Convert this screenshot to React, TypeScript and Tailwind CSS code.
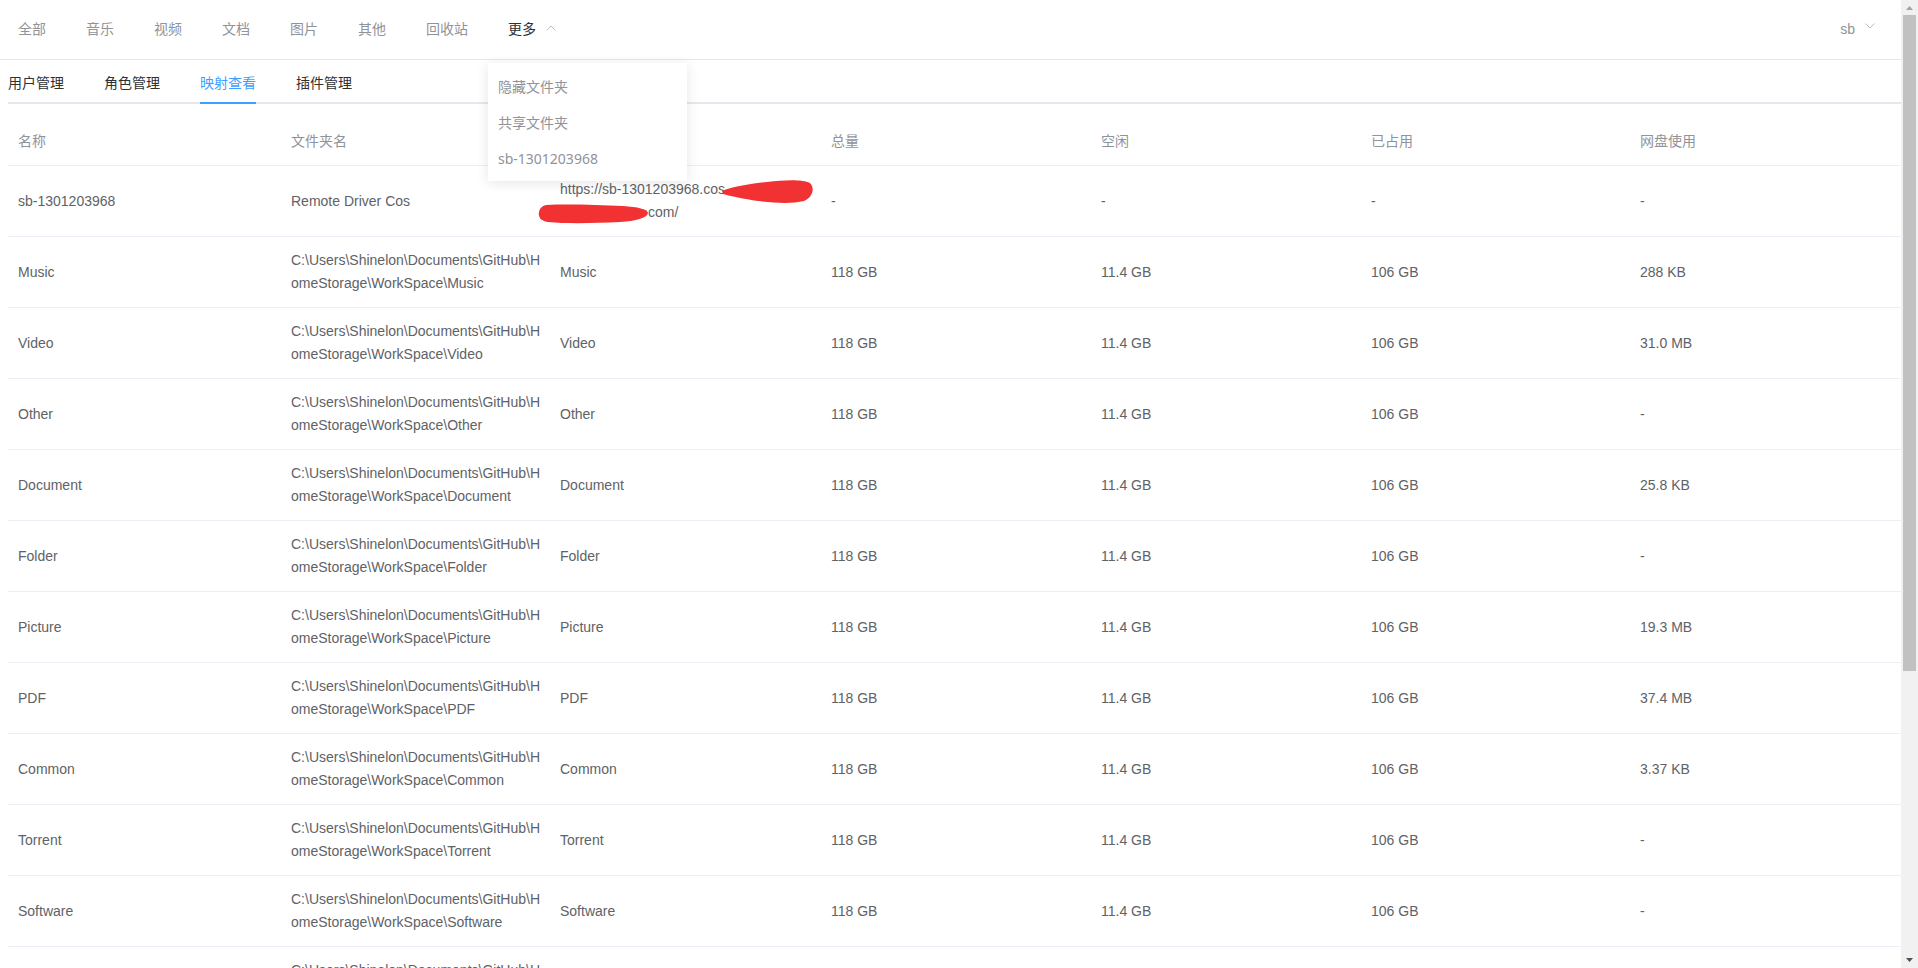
import React from 'react';

interface Mapping {
  name: string;
  folder: string[];
  target: string;
  total: string;
  free: string;
  used: string;
  disk: string;
}

const base = 'C:\\Users\\Shinelon\\Documents\\GitHub\\H';

const folderRow = (name: string, disk: string): Mapping => ({
  name,
  folder: [base, `omeStorage\\WorkSpace\\${name}`],
  target: name,
  total: '118 GB',
  free: '11.4 GB',
  used: '106 GB',
  disk,
});

const rows: Mapping[] = [
  folderRow('Music', '288 KB'),
  folderRow('Video', '31.0 MB'),
  folderRow('Other', '-'),
  folderRow('Document', '25.8 KB'),
  folderRow('Folder', '-'),
  folderRow('Picture', '19.3 MB'),
  folderRow('PDF', '37.4 MB'),
  folderRow('Common', '3.37 KB'),
  folderRow('Torrent', '-'),
  folderRow('Software', '-'),
  folderRow('Share', '-'),
];

const navItems = ['全部', '音乐', '视频', '文档', '图片', '其他', '回收站'];
const tabs = ['用户管理', '角色管理', '映射查看', '插件管理'];
// third header sits under the open dropdown
const headers = ['名称', '文件夹名', '', '总量', '空闲', '已占用', '网盘使用'];

const font = { fontFamily: '"Liberation Sans", "Noto Sans CJK SC", sans-serif' };
const cols = 'grid grid-cols-[273px_269px_271px_270px_270px_269px_1fr] border-b border-[#ebeef5]';

const Cell: React.FC<{ children?: React.ReactNode; className?: string }> = ({ children, className }) => (
  <div className={`flex min-h-[47px] flex-col justify-center px-[10px] py-3 leading-[23px] ${className ?? ''}`}>{children}</div>
);

const Chevron: React.FC<{ up?: boolean }> = ({ up }) => (
  <svg width="10" height="6" viewBox="0 0 10 6" fill="none" stroke="#b8bcc4" strokeWidth="1">
    {up ? <path d="M0.5 5.5 L5 1 L9.5 5.5" /> : <path d="M0.5 0.5 L5 5 L9.5 0.5" />}
  </svg>
);

export default function App() {
  return (
    <div className="flex h-screen w-full overflow-hidden bg-white text-[14px]" style={font}>
      <div className="min-w-0 flex-1 overflow-hidden">
        {/* top menu */}
        <div className="flex h-[60px] items-center border-b border-[#e6e6e6] pl-[18px]">
          <div className="flex items-center gap-10 text-[#909399]">
            {navItems.map((n) => (
              <span key={n}>{n}</span>
            ))}
            <div className="relative flex items-center text-[#303133]">
              <span>更多</span>
              <span className="ml-[10px] -mt-[4px]">
                <Chevron up />
              </span>
              <div
                className="absolute left-[-20px] top-[44px] z-10 w-[199px] bg-white py-[5px] text-[#909399] shadow-[0_2px_12px_0_rgba(0,0,0,0.1)]"
                style={{ fontFamily: '"Noto Sans", "Noto Sans CJK SC", sans-serif' }}
              >
                <div className="flex h-9 items-center px-[10px]">隐藏文件夹</div>
                <div className="flex h-9 items-center px-[10px]">共享文件夹</div>
                <div className="flex h-9 items-center px-[10px]">sb-1301203968</div>
              </div>
            </div>
          </div>
          <div className="ml-auto flex items-center pr-[26px] text-[#909399]">
            <span>sb</span>
            <span className="ml-[10px] -mt-[8px]">
              <Chevron />
            </span>
          </div>
        </div>

        <div className="pl-2">
          {/* tabs */}
          <div className="relative mt-[3px] flex h-[41px] items-center gap-10 text-[#303133]">
            {tabs.map((t, i) => (
              <div key={t} className={`relative flex h-full items-center ${i === 2 ? 'text-[#409eff]' : ''}`}>
                {t}
                {i === 2 && <div className="absolute bottom-0 left-0 right-0 z-10 h-[2px] bg-[#409eff]" />}
              </div>
            ))}
            <div className="absolute bottom-0 left-0 right-0 h-[2px] bg-[#e4e7ed]" />
          </div>

          {/* table */}
          <div className="mt-[14px] text-[#606266]">
            <div className={`${cols} text-[#909399]`}>
              {headers.map((h, i) => (
                <Cell key={i}>{h}</Cell>
              ))}
            </div>

            <div className={cols}>
              <Cell>sb-1301203968</Cell>
              <Cell>Remote Driver Cos</Cell>
              <Cell className="relative">
                <span>https://sb-1301203968.cos</span>
                <span className="pl-[88px]">com/</span>
                <svg className="absolute left-[172px] top-[13px]" width="92" height="25" viewBox="0 0 92 25">
                  <path
                    d="M0 12 C10 8 25 5 45 3 C62 1 80 0 88 4 C93 9 91 18 82 22 C70 25 52 24 36 22 C22 20 8 17 1 15 Z"
                    fill="#f23232"
                  />
                </svg>
                <svg className="absolute left-[-12px] top-[38px]" width="111" height="20" viewBox="0 0 111 20">
                  <path
                    d="M8 1 C30 0 60 1 85 2 C100 3 109 5 110 9 C109 14 98 17 82 18 C60 19 30 20 10 18 C2 17 0 12 1 8 C2 4 4 2 8 1 Z"
                    fill="#f23232"
                  />
                </svg>
              </Cell>
              <Cell>-</Cell>
              <Cell>-</Cell>
              <Cell>-</Cell>
              <Cell>-</Cell>
            </div>

            {rows.map((r) => (
              <div key={r.name} className={cols}>
                <Cell>{r.name}</Cell>
                <Cell>
                  {r.folder.map((l) => (
                    <span key={l}>{l}</span>
                  ))}
                </Cell>
                <Cell>{r.target}</Cell>
                <Cell>{r.total}</Cell>
                <Cell>{r.free}</Cell>
                <Cell>{r.used}</Cell>
                <Cell>{r.disk}</Cell>
              </div>
            ))}
          </div>
        </div>
      </div>

      {/* scrollbar */}
      <div className="flex w-[17px] shrink-0 flex-col bg-[#f1f1f1]">
        <div className="flex h-[15px] items-center justify-center">
          <svg width="7" height="4" viewBox="0 0 7 4">
            <path d="M0 4 L3.5 0 L7 4 Z" fill="#a3a3a3" />
          </svg>
        </div>
        <div className="mx-[2px] h-[656px] bg-[#c1c1c1]" />
        <div className="flex-1" />
        <div className="flex h-[17px] items-center justify-center">
          <svg width="7" height="4" viewBox="0 0 7 4">
            <path d="M0 0 L3.5 4 L7 0 Z" fill="#505050" />
          </svg>
        </div>
      </div>
    </div>
  );
}
